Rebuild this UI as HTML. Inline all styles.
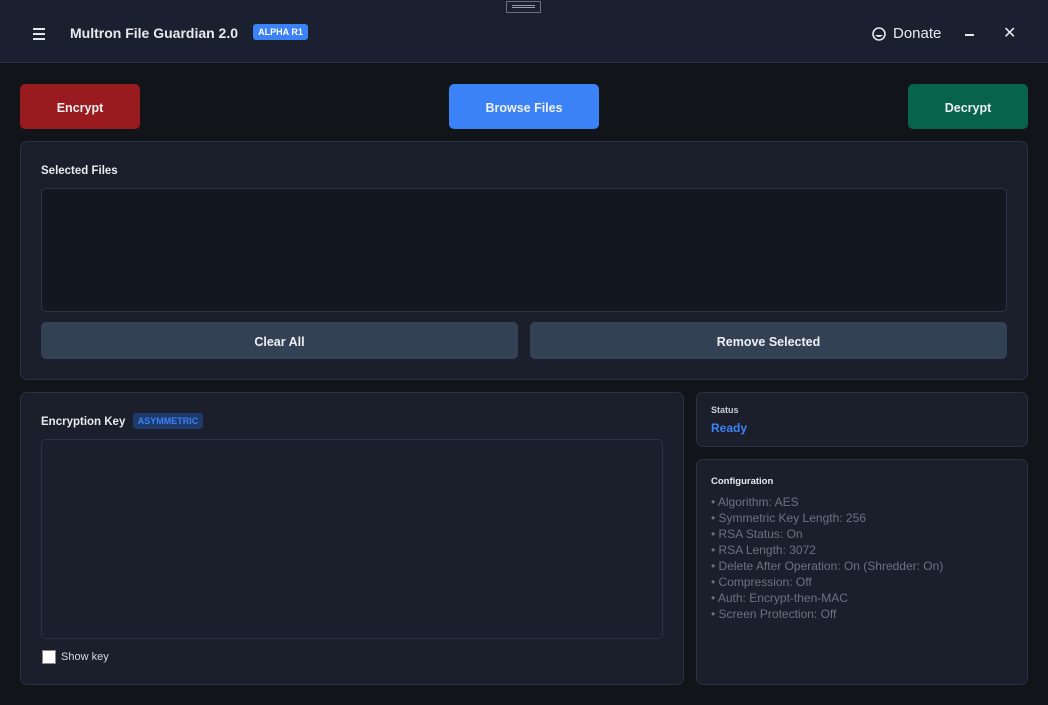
<!DOCTYPE html>
<html><head><style>
*{box-sizing:border-box;margin:0;padding:0}
body{width:1048px;height:705px;background:#111418;font-family:"Liberation Sans",sans-serif;position:relative;overflow:hidden;color:#e5e7eb}
.a{position:absolute}
.hdr{left:0;top:0;width:1048px;height:63px;background:#1b2030;border-bottom:1px solid #2c3344}
.btn{position:absolute;border-radius:5px;font-size:12.5px;font-weight:bold;color:#eef0f3;display:flex;align-items:center;justify-content:center;padding-top:2px}
.panel{position:absolute;background:#1b1f2b;border:1px solid #2a3142;border-radius:7px}
.ttl{position:absolute;font-size:11.5px;font-weight:bold;color:#e8eaee}
.cfg{position:absolute;left:711px;top:494px;font-size:12px;line-height:16px;color:#6b7280}
</style></head><body>
<div class="a hdr"></div>
<div class="a" style="left:506px;top:1px;width:35px;height:12px;border:1px solid #6b6f78;background:#1b2030"></div>
<div class="a" style="left:512px;top:5px;width:23px;height:1px;background:#9aa0aa"></div>
<div class="a" style="left:512px;top:7px;width:23px;height:1px;background:#9aa0aa"></div>
<div class="a" style="left:33px;top:28px;width:12px;height:1.5px;background:#e5e7eb"></div>
<div class="a" style="left:33px;top:33px;width:12px;height:1.5px;background:#e5e7eb"></div>
<div class="a" style="left:33px;top:38px;width:12px;height:1.5px;background:#e5e7eb"></div>
<div class="a" style="left:70px;top:25px;font-size:14px;font-weight:bold;color:#e8eaee">Multron File Guardian 2.0</div>
<div class="a" style="left:253px;top:24px;width:55px;height:16px;background:#3b82f6;border-radius:3px;font-size:9px;font-weight:bold;color:#fff;text-align:center;line-height:16px">ALPHA R1</div>
<svg class="a" style="left:871px;top:26px" width="16" height="16" viewBox="0 0 16 16"><circle cx="8" cy="8" r="6" fill="none" stroke="#e5e7eb" stroke-width="1.6"/><path d="M4 9 Q8 13 12 9" fill="#e5e7eb"/></svg>
<div class="a" style="left:893px;top:25px;font-size:15px;color:#e8eaee">Donate</div>
<div class="a" style="left:965px;top:34px;width:9px;height:1.5px;background:#e5e7eb"></div>
<div class="a" style="left:1003px;top:25px;font-size:16px;color:#e5e7eb;line-height:18px">✕</div>

<div class="btn" style="left:20px;top:84px;width:120px;height:45px;background:#991b1f">Encrypt</div>
<div class="btn" style="left:449px;top:84px;width:150px;height:45px;background:#3b82f6">Browse Files</div>
<div class="btn" style="left:908px;top:84px;width:120px;height:45px;background:#07634a">Decrypt</div>

<div class="panel" style="left:20px;top:141px;width:1008px;height:239px"></div>
<div class="ttl" style="left:41px;top:165px">Selected Files</div>
<div class="a" style="left:41px;top:188px;width:966px;height:124px;background:#131720;border:1px solid #2c3344;border-radius:5px"></div>
<div class="btn" style="left:41px;top:322px;width:477px;height:37px;background:#334155">Clear All</div>
<div class="btn" style="left:530px;top:322px;width:477px;height:37px;background:#334155">Remove Selected</div>

<div class="panel" style="left:20px;top:392px;width:664px;height:293px"></div>
<div class="ttl" style="left:41px;top:416px">Encryption Key</div>
<div class="a" style="left:133px;top:413px;width:70px;height:16px;background:#1e3a6a;border-radius:3px;font-size:9px;font-weight:bold;color:#3b82f6;text-align:center;line-height:16px">ASYMMETRIC</div>
<div class="a" style="left:41px;top:439px;width:622px;height:200px;border:1px solid #2c3344;border-radius:5px"></div>
<div class="a" style="left:42px;top:650px;width:14px;height:14px;background:#fff;border:1px solid #888"></div>
<div class="a" style="left:61px;top:651px;font-size:11px;color:#d5d8de">Show key</div>

<div class="panel" style="left:696px;top:392px;width:332px;height:55px"></div>
<div class="a" style="left:711px;top:405px;font-size:9px;font-weight:bold;color:#c8ccd2">Status</div>
<div class="a" style="left:711px;top:421px;font-size:12px;font-weight:bold;color:#3b82f6">Ready</div>

<div class="panel" style="left:696px;top:459px;width:332px;height:226px"></div>
<div class="a" style="left:711px;top:476px;font-size:9.5px;font-weight:bold;color:#e8eaee">Configuration</div>
<div class="cfg">• Algorithm: AES<br>• Symmetric Key Length: 256<br>• RSA Status: On<br>• RSA Length: 3072<br>• Delete After Operation: On (Shredder: On)<br>• Compression: Off<br>• Auth: Encrypt-then-MAC<br>• Screen Protection: Off</div>
</body></html>
